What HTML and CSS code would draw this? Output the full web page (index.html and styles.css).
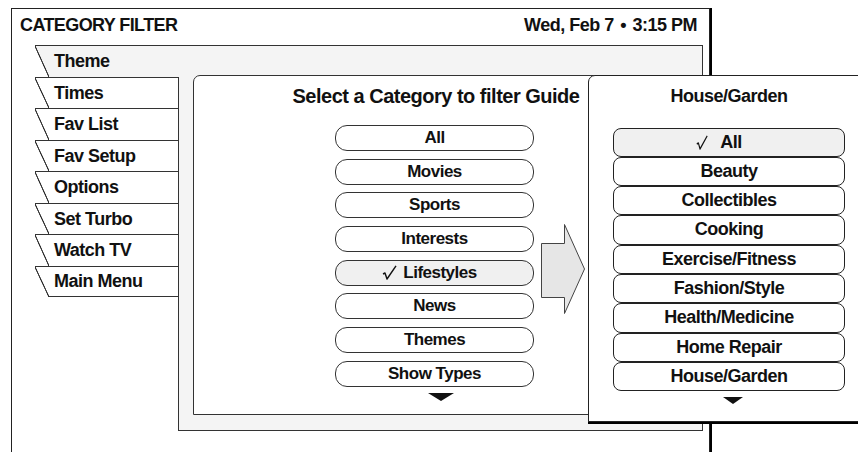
FILE: index.html
```html
<!DOCTYPE html>
<html>
<head>
<meta charset="utf-8">
<title>Category Filter</title>
<link rel="stylesheet" href="styles.css">
</head>
<body>
<div class="frame">
  <header class="hdr">
    <span class="hdr-title">CATEGORY FILTER</span>
    <span class="hdr-date">Wed, Feb 7 <span class="dot">•</span> 3:15 PM</span>
  </header>
  <div class="body">
    <div class="tabcol">
      <div class="tab tab-active"><span class="slant"></span><span class="tab-label">Theme</span></div>
      <div class="tabstack">
        <div class="tab"><span class="slant"></span><span class="tab-label">Times</span></div>
        <div class="tab"><span class="slant"></span><span class="tab-label">Fav List</span></div>
        <div class="tab"><span class="slant"></span><span class="tab-label">Fav Setup</span></div>
        <div class="tab"><span class="slant"></span><span class="tab-label">Options</span></div>
        <div class="tab"><span class="slant"></span><span class="tab-label">Set Turbo</span></div>
        <div class="tab"><span class="slant"></span><span class="tab-label">Watch TV</span></div>
        <div class="tab tab-last"><span class="slant"></span><span class="tab-label">Main Menu</span></div>
      </div>
    </div>
    <div class="panel">
      <div class="inner">
        <div class="inner-title">Select a Category to filter Guide</div>
        <div class="inner-row">
          <div class="catlist">
            <div class="pill">All</div>
            <div class="pill">Movies</div>
            <div class="pill">Sports</div>
            <div class="pill">Interests</div>
            <div class="pill pill-sel"><svg class="check" width="15" height="15" viewBox="0 0 15 15"><path d="M1 9 L3 8 L5 14 L14 0.8" fill="none" stroke="#111" stroke-width="1.4" stroke-linejoin="round"/></svg>Lifestyles</div>
            <div class="pill">News</div>
            <div class="pill">Themes</div>
            <div class="pill">Show Types</div>
            <div class="more more-left"></div>
          </div>
          <svg class="arrow" width="45" height="91" viewBox="0 0 45 91"><path d="M0.5 19.5 H23.5 V0.5 L43.5 45 L23.5 89.5 V73.5 H0.5 Z" fill="#e6e6e6" stroke="#444" stroke-width="1"/></svg>
        </div>
      </div>
    </div>
  </div>
  <div class="sub">
    <div class="sub-title">House/Garden</div>
    <div class="sublist">
      <div class="sbtn sbtn-sel"><svg class="check check-sm" width="12" height="15" viewBox="0 0 15 15" preserveAspectRatio="none"><path d="M1 9 L3 8 L5 14 L14 0.8" fill="none" stroke="#111" stroke-width="1.4" stroke-linejoin="round"/></svg>All</div>
      <div class="sbtn">Beauty</div>
      <div class="sbtn">Collectibles</div>
      <div class="sbtn">Cooking</div>
      <div class="sbtn">Exercise/Fitness</div>
      <div class="sbtn">Fashion/Style</div>
      <div class="sbtn">Health/Medicine</div>
      <div class="sbtn">Home Repair</div>
      <div class="sbtn">House/Garden</div>
    </div>
    <div class="more more-right"></div>
  </div>
</div>
</body>
</html>
```

FILE: styles.css
```css
html, body {
  margin: 0;
  padding: 0;
  background: #fff;
  height: 452px;
  overflow: hidden;
}
body {
  font-family: "Liberation Sans", Arial, sans-serif;
  font-weight: bold;
  color: #111;
  letter-spacing: -0.5px;
}
.frame {
  position: relative;
  margin: 8px 0 0 11px;
  width: 699px;
  height: 470px;
  box-sizing: border-box;
  border: 1px solid #222;
  border-bottom: none;
  box-shadow: 2px 0 0 #000;
}
.hdr {
  display: flex;
  justify-content: space-between;
  align-items: flex-start;
  height: 36px;
  box-sizing: border-box;
  padding: 6px 12px 0 8px;
  font-size: 18px;
  line-height: 20px;
}
.hdr-title {
  letter-spacing: -0.6px;
}
.dot {
  margin: 0 2px;
}
.body {
  display: flex;
  margin-left: 23px;
}
.tabcol {
  width: 144px;
  display: flex;
  flex-direction: column;
}
.tabstack {
  flex: 1;
  border-right: 1px solid #333;
}
.tab {
  height: 31.5px;
  box-sizing: border-box;
  border-top: 1px solid #333;
  display: flex;
  --fill: #fff;
}
.tab-active {
  --fill: #f4f4f4;
}
.slant {
  width: 14px;
  flex: none;
  background: linear-gradient(to top right, #fff calc(50% - 0.9px), #333 calc(50% - 0.3px), #333 calc(50% + 0.3px), var(--fill) calc(50% + 0.9px));
}
.tab-label {
  flex: 1;
  background: var(--fill);
  padding-left: 5px;
  font-size: 18px;
  line-height: 30px;
  white-space: nowrap;
}
.tab-last .tab-label {
  border-bottom: 1px solid #333;
  line-height: 29px;
}
.panel {
  width: 524px;
  box-sizing: border-box;
  background: #f4f4f4;
  border: 1px solid #333;
  border-left: none;
  padding: 29px 0 15px 14px;
}
.inner {
  width: 486px;
  height: 340px;
  box-sizing: border-box;
  background: #fff;
  border: 1px solid #333;
  border-top-left-radius: 7px;
}
.inner-title {
  padding-top: 8px;
  font-size: 20px;
  line-height: 24px;
  text-align: center;
  white-space: nowrap;
}
.inner-row {
  display: flex;
  align-items: flex-start;
  gap: 7px;
  margin-top: 17px;
  padding-left: 141px;
}
.catlist {
  width: 199px;
  display: flex;
  flex-direction: column;
  gap: 7.7px;
}
.pill {
  height: 26px;
  box-sizing: border-box;
  border: 1px solid #333;
  border-radius: 12px;
  text-align: center;
  font-size: 17px;
  line-height: 24px;
}
.pill-sel, .sbtn-sel {
  background: #f0f0f0;
}
.pill-sel {
  padding-right: 10px;
}
.check {
  display: inline-block;
  vertical-align: -2px;
  margin-right: 6px;
}
.check-sm {
  margin-right: 12px;
}
.sbtn-sel {
  padding-right: 20px;
}
.more {
  width: 0;
  height: 0;
  border-top: 8px solid #111;
  border-left: 13px solid transparent;
  border-right: 13px solid transparent;
}
.more-left {
  margin: -1.7px 0 0 93px;
}
.arrow {
  flex: none;
  margin-top: 99px;
}
.sub {
  position: absolute;
  left: 576px;
  top: 66px;
  width: 290px;
  height: 347px;
  box-sizing: border-box;
  background: #fff;
  border: 1px solid #222;
  border-top-left-radius: 7px;
  box-shadow: 0 2px 0 #000;
  padding: 9px 0 0 24px;
}
.sub-title {
  width: 232px;
  text-align: center;
  font-size: 18px;
  line-height: 22px;
}
.sublist {
  width: 232px;
  margin-top: 20.5px;
  display: flex;
  flex-direction: column;
}
.sbtn {
  height: 29.33px;
  box-sizing: border-box;
  border: 1px solid #222;
  border-radius: 8px;
  text-align: center;
  font-size: 18px;
  line-height: 27px;
}
.more-right {
  border-top-width: 7px;
  border-left-width: 10px;
  border-right-width: 10px;
  margin: 6px 0 0 110px;
}
```
